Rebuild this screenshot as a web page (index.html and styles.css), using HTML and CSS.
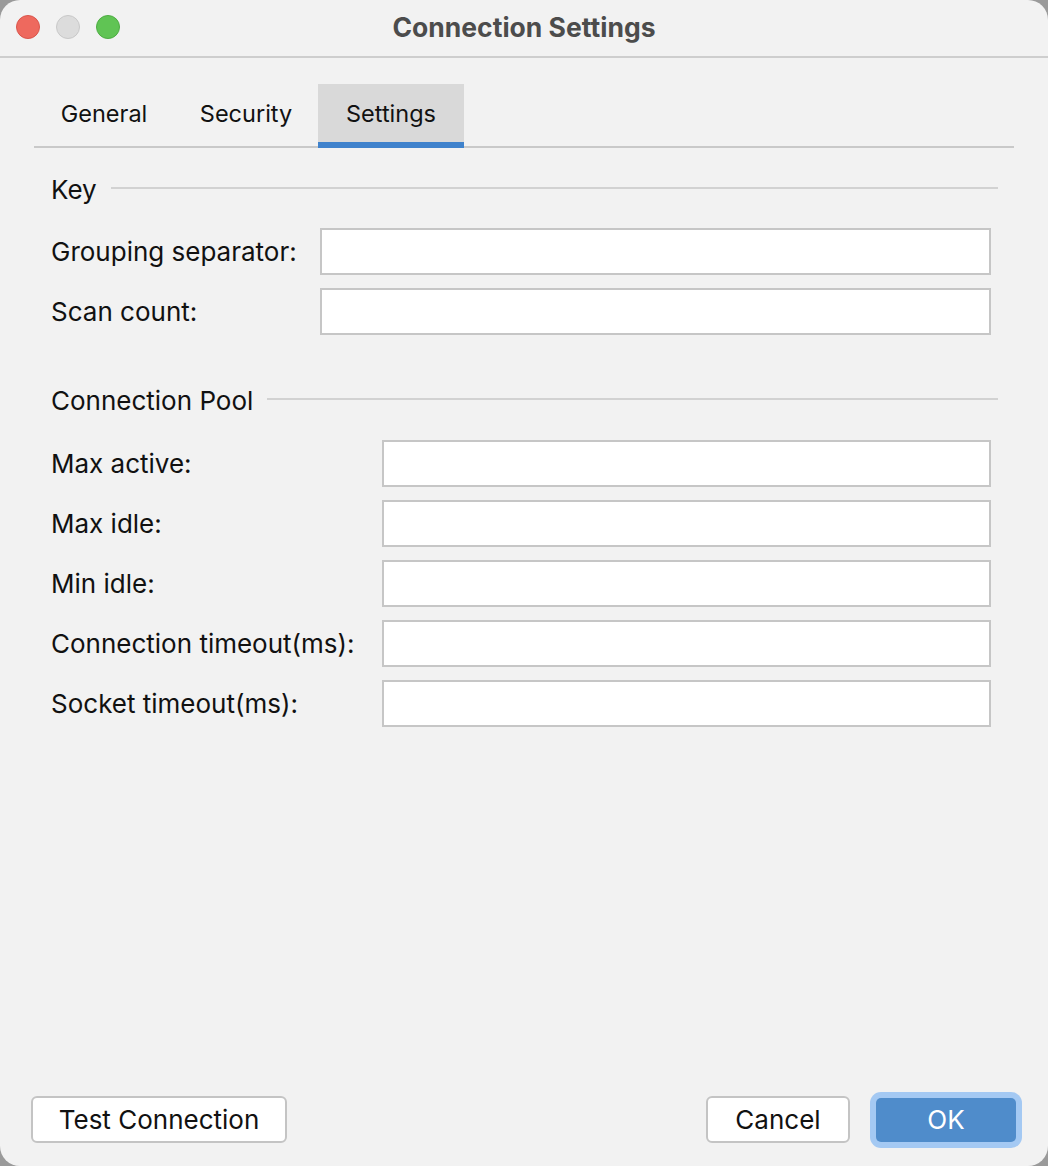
FILE: index.html
```html
<!DOCTYPE html>
<html lang="en">
<head>
<meta charset="utf-8">
<title>Connection Settings</title>
<link rel="stylesheet" href="styles.css">
</head>
<body>
<div class="window">
  <div class="titlebar">
    <div class="lights">
      <span class="light red"></span>
      <span class="light gray"></span>
      <span class="light green"></span>
    </div>
    <div class="title">Connection Settings</div>
    <div></div>
  </div>

  <div class="tabs">
    <div class="tab tab-general">General</div>
    <div class="tab tab-security">Security</div>
    <div class="tab tab-settings active">Settings</div>
  </div>

  <div class="form">
    <div class="group-head key-head"><span>Key</span><span class="rule"></span></div>
    <div class="rows rows-key">
      <label class="lbl">Grouping separator:</label><div class="input"></div>
      <label class="lbl">Scan count:</label><div class="input"></div>
    </div>

    <div class="group-head pool-head"><span>Connection Pool</span><span class="rule"></span></div>
    <div class="rows rows-pool">
      <label class="lbl">Max active:</label><div class="input"></div>
      <label class="lbl">Max idle:</label><div class="input"></div>
      <label class="lbl">Min idle:</label><div class="input"></div>
      <label class="lbl">Connection timeout(ms):</label><div class="input"></div>
      <label class="lbl">Socket timeout(ms):</label><div class="input"></div>
    </div>
  </div>

  <div class="footer">
    <button class="btn btn-test">Test Connection</button>
    <div class="right-btns">
      <button class="btn btn-cancel">Cancel</button>
      <button class="btn btn-ok">OK</button>
    </div>
  </div>
</div>
</body>
</html>
```

FILE: styles.css
```css
* { box-sizing: border-box; }
html, body { margin: 0; padding: 0; }
body {
  background: #9a9a9a;
  font-family: "Inter", "Liberation Sans", sans-serif;
  color: #111;
}
.window {
  width: 1048px;
  height: 1166px;
  background: #f2f2f2;
  border-radius: 20px;
  overflow: hidden;
  display: flex;
  flex-direction: column;
}
.titlebar {
  height: 58px;
  border-bottom: 2px solid #cecece;
  display: grid;
  grid-template-columns: 1fr auto 1fr;
  align-items: center;
  padding-left: 16px;
}
.lights { display: flex; gap: 16px; align-items: center; margin-top: -2px; }
.light {
  width: 24px; height: 24px; border-radius: 50%;
  display: block;
}
.light.red { background: #ee695e; border: 1px solid #d9564c; }
.light.gray { background: #dcdcdc; border: 1px solid #c8c8c8; }
.light.green { background: #60c454; border: 1px solid #4eac43; }
.title {
  font-weight: 700;
  font-size: 26.5px;
  color: #4c4c4c;
  margin-top: -3px;
  margin-left: -16px;
}
.tabs {
  margin: 26px 34px 0 34px;
  display: flex;
  border-bottom: 2px solid #c9c9c9;
  height: 64px;
}
.tab {
  height: 62px;
  font-size: 23.5px;
  display: flex;
  align-items: center;
  justify-content: center;
  padding-bottom: 4px;
  color: #111;
}
.tab-general { width: 140px; }
.tab-security { width: 144px; }
.tab-settings { width: 146px; }
.tab.active {
  height: 64px;
  background: #d9d9d9;
  border-bottom: 6px solid #3f82cc;
  padding-bottom: 0;
  margin-bottom: -2px;
}
.form {
  padding: 0 50px 0 51px;
}
.group-head {
  display: flex;
  align-items: center;
  gap: 14px;
  font-size: 26px;
  height: 32px;
}
.key-head { margin-top: 25px; }
.pool-head { margin-top: 49px; }
.rule {
  flex: 1;
  height: 2px;
  background: #d2d2d2;
  margin-top: -2px;
}
.rows {
  display: grid;
  row-gap: 13px;
  margin-top: 23px;
  padding-right: 7px;
  align-items: center;
}
.rows-key { grid-template-columns: 269px 1fr; }
.rows-pool { grid-template-columns: 331px 1fr; margin-top: 24px; }
.lbl {
  font-size: 26px;
  color: #111;
  white-space: nowrap;
}
.input {
  height: 47px;
  background: #fff;
  border: 2px solid #c6c6c6;
}
.footer {
  margin-top: auto;
  display: flex;
  justify-content: space-between;
  align-items: center;
  padding: 0 32px 23px 31px;
}
.right-btns { display: flex; align-items: center; gap: 26px; }
.btn {
  font-family: "Inter", "Liberation Sans", sans-serif;
  font-size: 26px;
  height: 47px;
  border-radius: 6px;
  border: 2px solid #c4c4c4;
  background: #fff;
  color: #111;
  padding: 0;
  margin: 0;
}
.btn-test { width: 256px; }
.btn-cancel { width: 144px; }
.btn-ok {
  width: 140px;
  height: 44px;
  background: #4f8ccb;
  border: none;
  color: #fff;
  border-radius: 5px;
  box-shadow: 0 0 0 6px #a4c9f3;
}
```
